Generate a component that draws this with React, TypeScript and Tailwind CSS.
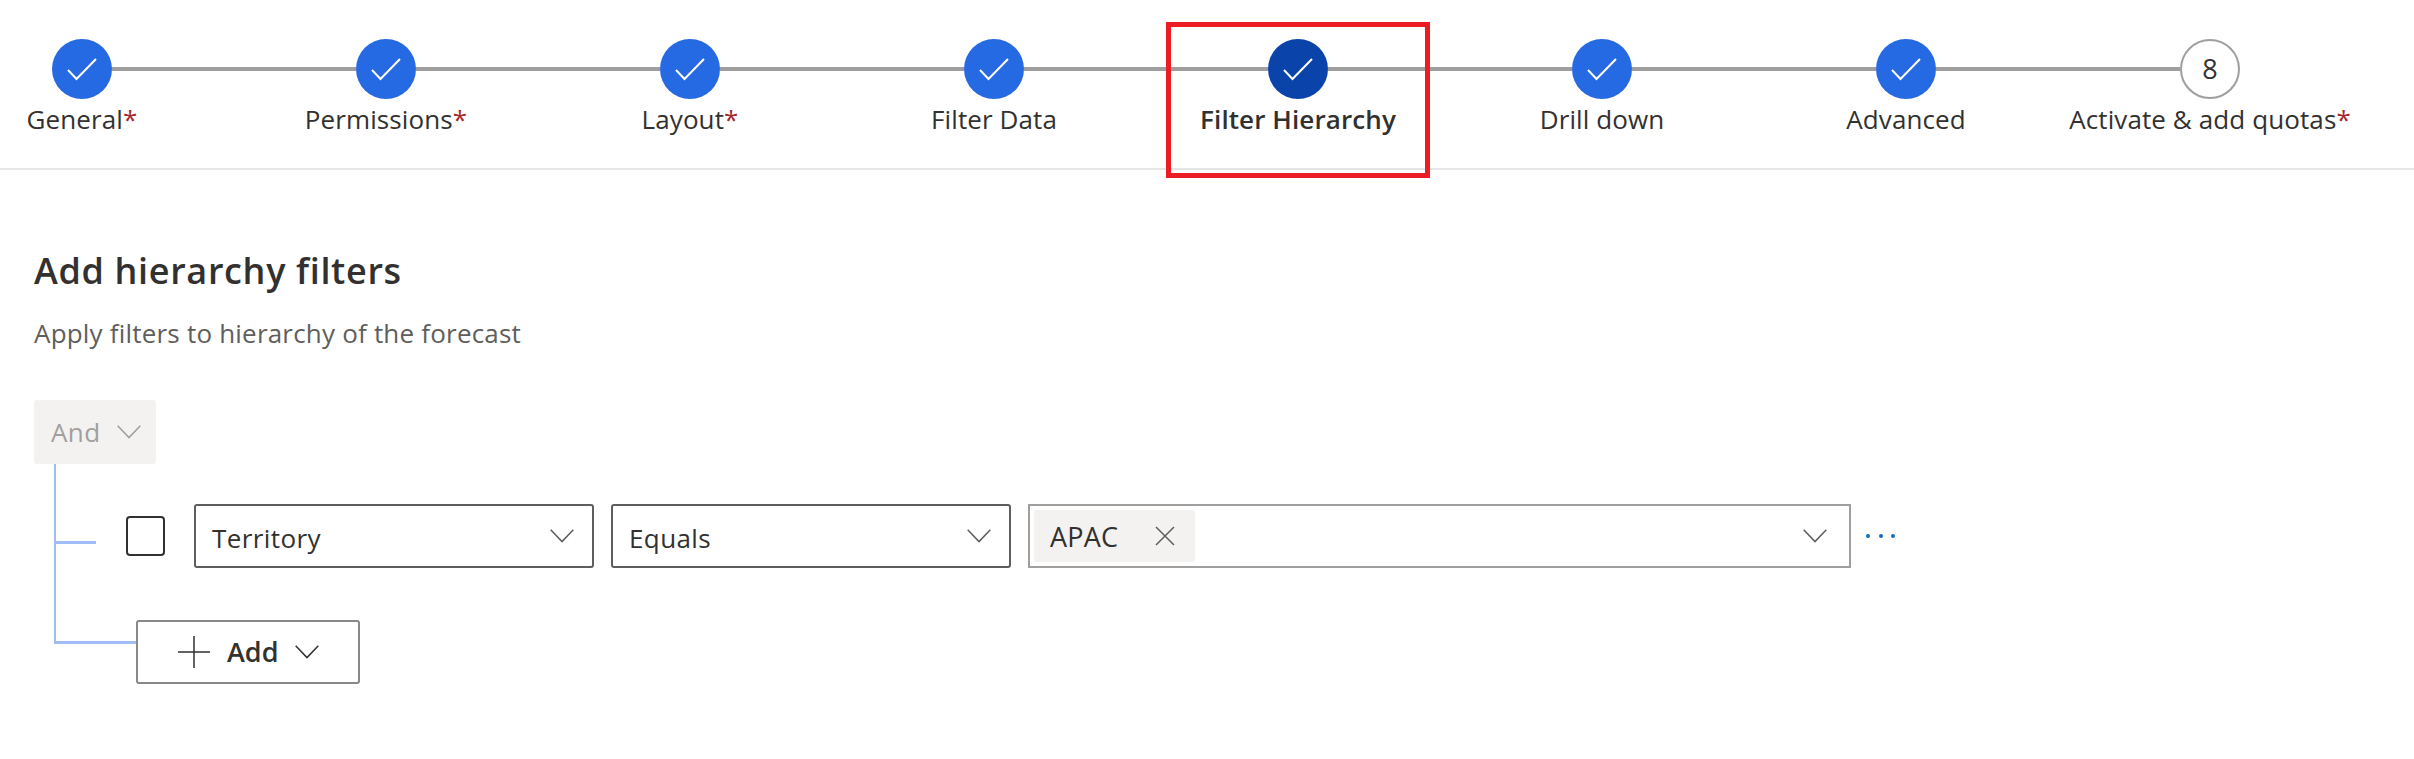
const steps = [
  { label: 'General', required: true },
  { label: 'Permissions', required: true },
  { label: 'Layout', required: true },
  { label: 'Filter Data' },
  { label: 'Filter Hierarchy', active: true },
  { label: 'Drill down' },
  { label: 'Advanced' },
  { label: 'Activate & add quotas', required: true, number: 8 },
]

function Chevron({ className = 'text-[#605e5c]' }: { className?: string }) {
  return (
    <svg width="24" height="14" viewBox="0 0 24 14" fill="none" className={`shrink-0 ${className}`}>
      <path d="M0.7 0.7 L12 12.6 L23.3 0.7" stroke="currentColor" strokeWidth="1.5" />
    </svg>
  )
}

function Step({ step, index }: { step: (typeof steps)[number]; index: number }) {
  return (
    <div className="flex flex-col items-center">
      <div className="flex w-full items-center">
        <div className={`h-1 flex-1 ${index === 0 ? '' : 'bg-[#9e9e9e]'}`} />
        {step.number ? (
          <div className="flex h-[60px] w-[60px] items-center justify-center rounded-full border-2 border-[#a19f9d] text-[27px] text-[#323130]">
            {step.number}
          </div>
        ) : (
          <div className={`flex h-[60px] w-[60px] items-center justify-center rounded-full ${step.active ? 'bg-[#0a44aa]' : 'bg-[#2569e3]'}`}>
            <svg width="60" height="60" viewBox="0 0 60 60" fill="none">
              <path d="M16 31 L24.5 40 L44 20" stroke="white" strokeWidth="2" />
            </svg>
          </div>
        )}
        <div className={`h-1 flex-1 ${index === steps.length - 1 ? '' : 'bg-[#9e9e9e]'}`} />
      </div>
      <div className={`mt-[2px] h-9 whitespace-nowrap text-[26px] leading-9 tracking-[0.1px] text-[#323130] ${step.active ? 'font-semibold' : ''}`}>
        {step.label}
        {step.required && <span className="text-[#a4262c]">*</span>}
      </div>
    </div>
  )
}

function Select({ label }: { label: string }) {
  return (
    <div className="flex h-16 w-[400px] items-center justify-between rounded-[3px] border-2 border-[#605e5c] pl-4 pr-[18px]">
      <span className="pt-1 text-[26px] tracking-[0.4px] text-[#323130]">{label}</span>
      <Chevron />
    </div>
  )
}

export default function App() {
  return (
    <div className="relative h-[759px] w-[2414px] overflow-hidden bg-white font-['Open_Sans',sans-serif]">
      <div className="h-[170px] border-b-2 border-[#e5e5e5] pt-[39px]">
        <div className="ml-[-70px] grid w-[2432px] grid-cols-8">
          {steps.map((step, i) => (
            <Step key={step.label} step={step} index={i} />
          ))}
        </div>
      </div>

      {/* highlight round the current step */}
      <div className="absolute left-[1166px] top-[22px] h-[156px] w-[264px] border-[5px] border-[#ed1c24]" />

      <div className="px-[34px]">
        <h1 className="mt-[77px] h-12 text-[36px] font-semibold leading-[48px] tracking-[0.65px] text-[#323130]">Add hierarchy filters</h1>
        <p className="mt-5 h-9 text-[26px] leading-9 tracking-[0.2px] text-[#605e5c]">Apply filters to hierarchy of the forecast</p>

        <div className="relative mt-[49px]">
          <div className="flex h-16 w-[122px] items-center rounded-[3px] bg-[#f3f2f1] pl-[17px]">
            <span className="text-[26px] tracking-[0.4px] text-[#a19f9d]">And</span>
            <Chevron className="ml-4 text-[#a19f9d]" />
          </div>

          {/* tree connectors */}
          <div className="absolute left-5 top-16 h-[180px] w-0.5 bg-[#9fbcf7]" />
          <div className="absolute left-5 top-[141px] h-[3px] w-[42px] bg-[#9fbcf7]" />
          <div className="absolute left-5 top-[241px] h-[3px] w-[82px] bg-[#9fbcf7]" />

          <div className="ml-[92px] mt-10 flex items-center">
            <div className="h-10 w-[39px] rounded-[4px] border-2 border-[#323130]" />
            <div className="ml-[29px] flex gap-[17px]">
              <Select label="Territory" />
              <Select label="Equals" />
            </div>
            <div className="ml-[17px] flex h-16 w-[823px] items-center justify-between border-2 border-[#a19f9d] pl-1 pr-[22px]">
              <div className="flex h-[52px] w-[161px] items-center rounded-[3px] bg-[#f3f2f1] pl-4">
                <span className="pt-[2px] text-[27px] font-medium tracking-[0.2px] text-[#323130]">APAC</span>
                <svg width="20" height="20" viewBox="0 0 20 20" fill="none" className="ml-auto mr-5 text-[#605e5c]">
                  <path d="M1 1 L19 19 M19 1 L1 19" stroke="currentColor" strokeWidth="1.5" />
                </svg>
              </div>
              <Chevron />
            </div>
            <div className="ml-[15px] flex gap-[8.5px]">
              <span className="h-1 w-1 rounded-full bg-[#0f6cbd]" />
              <span className="h-1 w-1 rounded-full bg-[#0f6cbd]" />
              <span className="h-1 w-1 rounded-full bg-[#0f6cbd]" />
            </div>
          </div>

          <div className="ml-[102px] mt-[52px] flex h-16 w-56 items-center rounded-[3px] border-2 border-[#8a8886] pl-10">
            <svg width="32" height="32" viewBox="0 0 32 32" fill="none" className="text-[#323130]">
              <path d="M16 0 V32 M0 16 H32" stroke="currentColor" strokeWidth="1.5" />
            </svg>
            <span className="ml-[17px] text-[27px] font-semibold text-[#323130]">Add</span>
            <Chevron className="ml-[17px] text-[#323130]" />
          </div>
        </div>
      </div>
    </div>
  )
}
